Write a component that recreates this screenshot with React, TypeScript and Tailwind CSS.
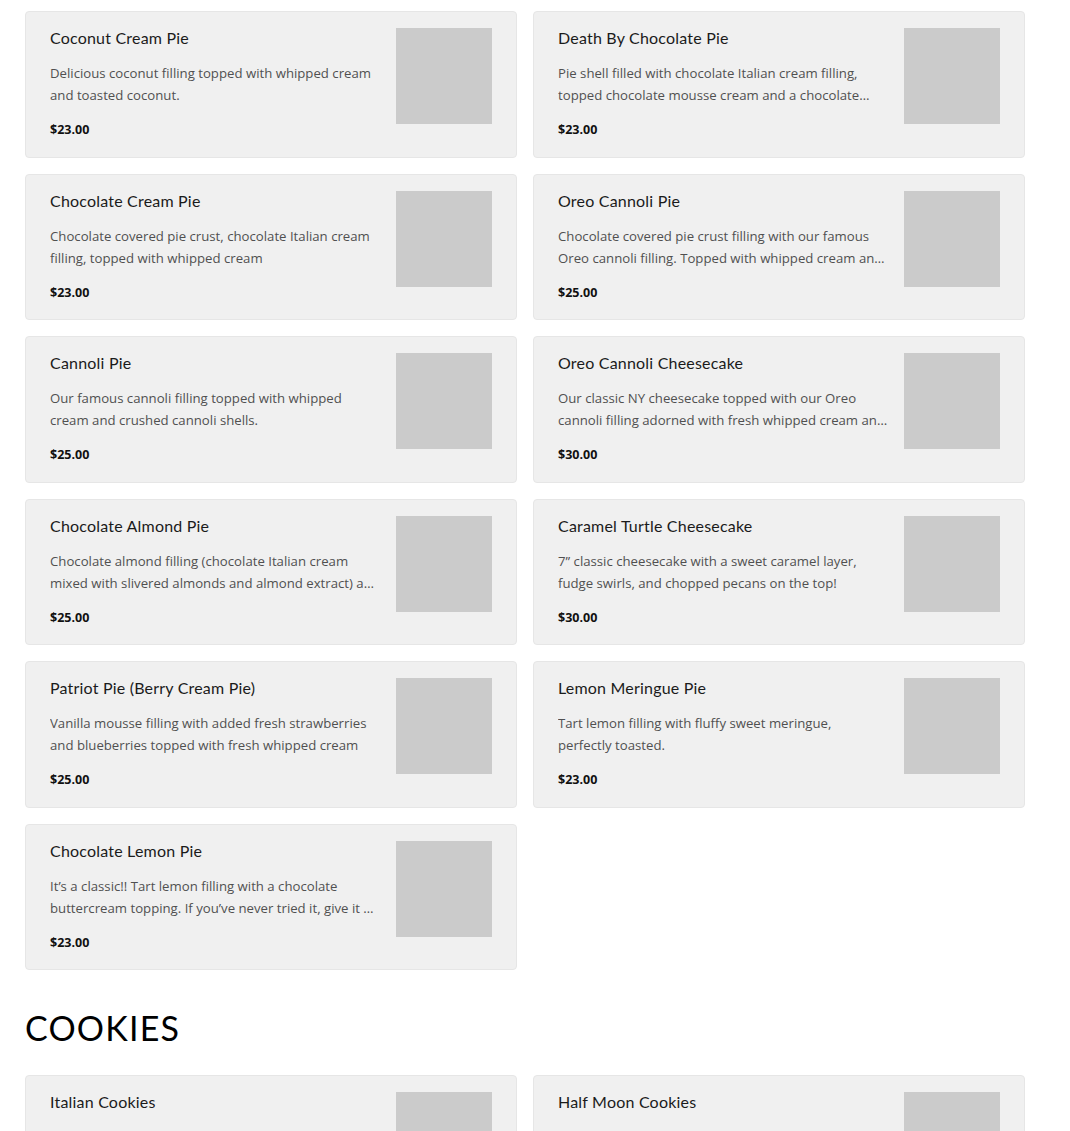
import React from "react";

type Item = {
  name: string;
  description: string;
  price: string;
};

const pies: Item[] = [
  {
    name: "Coconut Cream Pie",
    description: "Delicious coconut filling topped with whipped cream and toasted coconut.",
    price: "$23.00",
  },
  {
    name: "Death By Chocolate Pie",
    description:
      "Pie shell filled with chocolate Italian cream filling, topped chocolate mousse cream and a chocolate ganache drizzle.",
    price: "$23.00",
  },
  {
    name: "Chocolate Cream Pie",
    description: "Chocolate covered pie crust, chocolate Italian cream filling, topped with whipped cream",
    price: "$23.00",
  },
  {
    name: "Oreo Cannoli Pie",
    description:
      "Chocolate covered pie crust filling with our famous Oreo cannoli filling. Topped with whipped cream and crushed Oreos.",
    price: "$25.00",
  },
  {
    name: "Cannoli Pie",
    description: "Our famous cannoli filling topped with whipped cream and crushed cannoli shells.",
    price: "$25.00",
  },
  {
    name: "Oreo Cannoli Cheesecake",
    description:
      "Our classic NY cheesecake topped with our Oreo cannoli filling adorned with fresh whipped cream and crushed Oreos.",
    price: "$30.00",
  },
  {
    name: "Chocolate Almond Pie",
    description:
      "Chocolate almond filling (chocolate Italian cream mixed with slivered almonds and almond extract) and topped with whipped cream.",
    price: "$25.00",
  },
  {
    name: "Caramel Turtle Cheesecake",
    description: "7\u201d classic cheesecake with a sweet caramel layer, fudge swirls, and chopped pecans on the top!",
    price: "$30.00",
  },
  {
    name: "Patriot Pie (Berry Cream Pie)",
    description: "Vanilla mousse filling with added fresh strawberries and blueberries topped with fresh whipped cream",
    price: "$25.00",
  },
  {
    name: "Lemon Meringue Pie",
    description: "Tart lemon filling with fluffy sweet meringue, perfectly toasted.",
    price: "$23.00",
  },
  {
    name: "Chocolate Lemon Pie",
    description:
      "It\u2019s a classic!! Tart lemon filling with a chocolate buttercream topping. If you\u2019ve never tried it, give it a try!",
    price: "$23.00",
  },
];

const cookies: Item[] = [
  {
    name: "Italian Cookies",
    description: "An assortment of our traditional Italian cookies, baked fresh daily in our bakery.",
    price: "$18.00",
  },
  {
    name: "Half Moon Cookies",
    description: "Soft cake-like cookie frosted half with chocolate and half with vanilla fondant icing.",
    price: "$3.50",
  },
];

const MenuCard = ({ item }: { item: Item }) => (
  <div className="flex gap-4 rounded-[4px] border border-[#e6e6e6] bg-[#f0f0f0] px-6 pt-4 pb-[16.5px]">
    <div className="min-w-0 flex-1">
      <h3 className="font-['Lato',sans-serif] text-[16px] leading-5 font-normal tracking-[0.2px] text-[#1b1b1b]">
        {item.name}
      </h3>
      <p className="mt-[14px] line-clamp-2 font-['Open_Sans',sans-serif] text-[13.2px] leading-[22px] text-[#505050]">
        {item.description}
      </p>
      <div className="mt-[14px] font-['Open_Sans',sans-serif] text-[12.5px] leading-5 font-bold text-[#111]">
        {item.price}
      </div>
    </div>
    <div className="h-24 w-24 shrink-0 bg-[#cbcbcb]" />
  </div>
);

export default function App() {
  return (
    <div className="min-h-screen bg-white pt-[11px] pl-[25px]">
      <div className="w-[1000px]">
        <div className="grid grid-cols-2 gap-4">
          {pies.map((item) => (
            <MenuCard key={item.name} item={item} />
          ))}
        </div>
        <h2 className="mt-[37px] mb-[27px] font-['Lato',sans-serif] text-[34px] leading-[41px] font-normal tracking-[1.2px] text-black">
          COOKIES
        </h2>
        <div className="grid grid-cols-2 gap-4">
          {cookies.map((item) => (
            <MenuCard key={item.name} item={item} />
          ))}
        </div>
      </div>
    </div>
  );
}
